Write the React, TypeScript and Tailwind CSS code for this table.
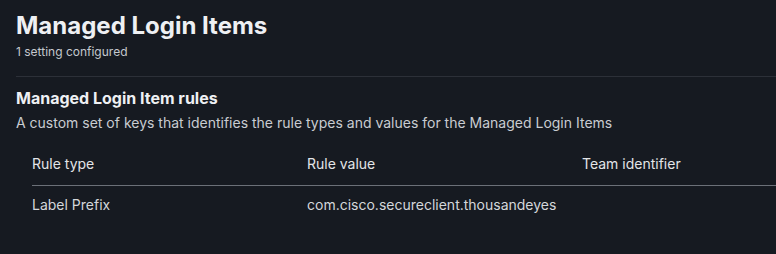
const rules = [
  { type: "Label Prefix", value: "com.cisco.secureclient.thousandeyes", team: "" },
];

export default function App() {
  return (
    <div className="min-h-[254px] w-full bg-[#161a21] pl-4 pt-[11px] font-['Inter',sans-serif] text-[#e6e8eb]">
      <h1 className="text-[24px] font-bold leading-[30px] text-[#eef0f3]">
        Managed Login Items
      </h1>
      <p className="mt-[2px] text-[12px] leading-[18px] text-[#c4c8ce]">1 setting configured</p>
      <div className="mt-[15px] h-px bg-[#2c3038]" />
      <h2 className="mt-[10px] text-[16px] font-bold leading-[22px] text-[#eef0f3]">
        Managed Login Item rules
      </h2>
      <p className="mt-[4px] text-[14px] leading-[20px] text-[#c9ccd1]">
        A custom set of keys that identifies the rule types and values for the Managed Login Items
      </p>
      <div className="ml-4 mt-[21px]">
        <div className="grid grid-cols-[275px_275px_1fr] border-b border-[#6b7078] pb-[11px] text-[14px] leading-[20px] text-[#e3e5e8]">
          <div>Rule type</div>
          <div>Rule value</div>
          <div>Team identifier</div>
        </div>
        {rules.map((r) => (
          <div
            key={r.value}
            className="grid grid-cols-[275px_275px_1fr] pt-[9px] text-[14px] leading-[20px] text-[#d4d7db]"
          >
            <div>{r.type}</div>
            <div>{r.value}</div>
            <div>{r.team}</div>
          </div>
        ))}
      </div>
    </div>
  );
}
